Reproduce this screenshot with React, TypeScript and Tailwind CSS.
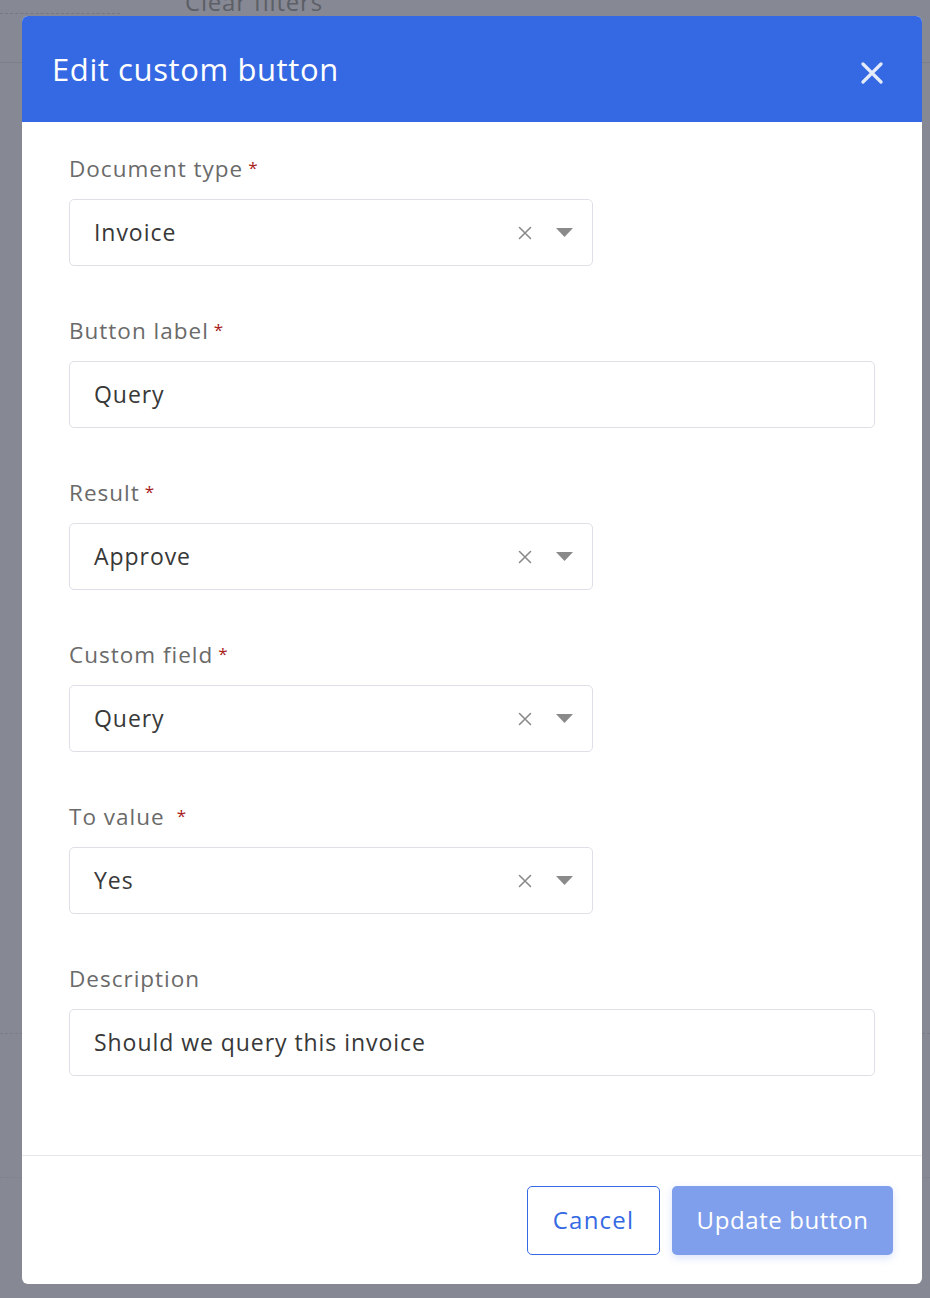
import React from "react";

const FONT = "font-['Open_Sans',_'Liberation_Sans',_sans-serif]";

type Field = {
  label: string;
  value: string;
  kind: "select" | "text";
  required?: boolean;
  gap?: boolean;
};

const fields: Field[] = [
  { label: "Document type", value: "Invoice", kind: "select", required: true },
  { label: "Button label", value: "Query", kind: "text", required: true },
  { label: "Result", value: "Approve", kind: "select", required: true },
  { label: "Custom field", value: "Query", kind: "select", required: true },
  { label: "To value", value: "Yes", kind: "select", required: true, gap: true },
  { label: "Description", value: "Should we query this invoice", kind: "text" },
];

function ClearIcon() {
  return (
    <svg width="14" height="14" viewBox="0 0 14 14" className="text-[#8a8a8a]">
      <path d="M1.5 1.5l11 11M12.5 1.5l-11 11" stroke="currentColor" strokeWidth="1.6" strokeLinecap="round" />
    </svg>
  );
}

function Caret() {
  return (
    <svg width="17" height="9" viewBox="0 0 17 9" className="text-[#8a8a8a]">
      <path d="M0 0h17L8.5 9z" fill="currentColor" />
    </svg>
  );
}

function FormField({ f }: { f: Field }) {
  return (
    <div className="flex flex-col">
      <label className="h-[30px] text-[22.5px] leading-[30px] text-[#6a6a6a] tracking-[1px]">
        {f.label}
        {f.required && (
          <span className={`relative -top-[3px] text-[17px] text-[#a91b1b] ${f.gap ? "ml-[12px]" : "ml-[5px]"}`}>*</span>
        )}
      </label>
      <div
        className={`mt-[15px] flex h-[67px] items-center rounded-[5px] border border-[#dedfe8] bg-white pl-[24px] ${
          f.kind === "select" ? "w-[524px] pr-[19px]" : "w-[806px]"
        }`}
      >
        <span className="flex-1 text-[23px] text-[#383838] tracking-[0.95px]">{f.value}</span>
        {f.kind === "select" && (
          <div className="flex items-center">
            <ClearIcon />
            <span className="ml-[24px]">
              <Caret />
            </span>
          </div>
        )}
      </div>
    </div>
  );
}

export default function App() {
  return (
    <div className={`relative h-[1298px] w-[930px] overflow-hidden bg-[#868893] ${FONT}`}>
      {/* page behind the overlay */}
      <div className="absolute left-0 top-[13px] w-[120px] border-t border-dashed border-[#767781]" />
      <div className="absolute left-[185px] -top-[13px] text-[24px] leading-[30px] tracking-[0.8px] text-[#5d5f66]">Clear filters</div>
      <div className="absolute left-0 right-0 top-[62px] border-t border-[#7d7f8a]" />
      <div className="absolute left-0 right-0 top-[1033px] border-t border-dashed border-[#7a7c86]" />
      <div className="absolute left-0 right-0 top-[1177px] border-t border-dotted border-[#7d7f89]" />

      {/* modal */}
      <div className="absolute left-[22px] top-[16px] flex h-[1268px] w-[900px] flex-col overflow-hidden rounded-[6px] bg-white">
        <div className="flex h-[106px] shrink-0 items-center justify-between bg-[#3569e3] pl-[30px] pr-[39px]">
          <h1 className="text-[31px] font-medium text-white tracking-[0.6px]">Edit custom button</h1>
          <svg width="22" height="22" viewBox="0 0 22 22" className="mt-[8px] text-[#e4ebfb]">
            <path d="M2 2l18 18M20 2L2 20" stroke="currentColor" strokeWidth="3.2" strokeLinecap="round" />
          </svg>
        </div>

        <div className="flex flex-1 flex-col gap-[50px] pl-[47px] pt-[32px]">
          {fields.map((f) => (
            <FormField key={f.label} f={f} />
          ))}
        </div>

        <div className="flex h-[129px] shrink-0 items-center justify-end gap-[12px] border-t border-[#e6e7ef] pr-[29px]">
          <button className="h-[69px] w-[133px] rounded-[5px] border border-[#3569e3] bg-white text-[24px] tracking-[1.2px] text-[#3569e3]">
            Cancel
          </button>
          <button className="h-[69px] w-[221px] rounded-[5px] bg-[#7f9fec] text-[24px] tracking-[0.6px] text-white shadow-[0_3px_8px_rgba(53,105,227,0.18)]">
            Update button
          </button>
        </div>
      </div>
    </div>
  );
}
